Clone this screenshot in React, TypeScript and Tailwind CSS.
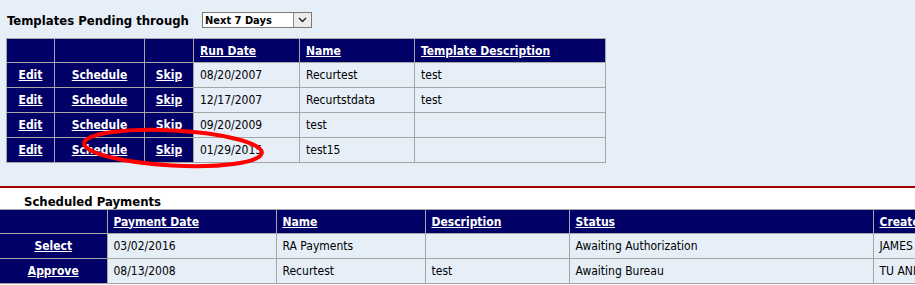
import React from 'react';

const FONT = "font-['DejaVu_Sans_Condensed','DejaVu_Sans',sans-serif]";

const templates = [
  { date: '08/20/2007', name: 'Recurtest', desc: 'test' },
  { date: '12/17/2007', name: 'Recurtstdata', desc: 'test' },
  { date: '09/20/2009', name: 'test', desc: '' },
  { date: '01/29/2015', name: 'test15', desc: '' },
];

const payments = [
  { action: 'Select', date: '03/02/2016', name: 'RA Payments', desc: '', status: 'Awaiting Authorization', by: 'JAMES' },
  { action: 'Approve', date: '08/13/2008', name: 'Recurtest', desc: 'test', status: 'Awaiting Bureau', by: 'TU ANH' },
];

const th = 'h-[24px] border border-[#a6a6a6] bg-[#000066] px-[6px] text-left font-bold text-white';
const act = 'h-[25px] border border-[#a6a6a6] bg-[#000066] text-center font-bold text-white';
const td = 'h-[25px] border border-[#a6a6a6] px-[6px] text-black';

export default function App() {
  return (
    <div className={`w-[915px] h-[285px] overflow-hidden text-[12px] leading-none ${FONT}`}>
      {/* templates pending */}
      <div className="relative h-[186px] bg-[#e6eef8] pl-[6px] pt-[12px]">
        <div className="flex items-center h-[16px]">
          <span className="w-[196px] pl-[1px] text-[13px] font-bold text-black">Templates Pending through</span>
          <div className="flex h-[16px] w-[110px] items-stretch border border-[#7a7a7a] bg-white">
            <span className="flex-1 pl-[2px] pt-[2px] text-[11px] font-bold text-black">Next 7 Days</span>
            <span className="flex w-[18px] items-center justify-center border-l border-[#8a8a8a] bg-[#ececec]">
              <svg width="9" height="6" viewBox="0 0 9 6">
                <path d="M1 1 L4.5 4.5 L8 1" fill="none" stroke="#222" strokeWidth="1.4" />
              </svg>
            </span>
          </div>
        </div>

        <table className="mt-[10px] border-collapse">
          <thead>
            <tr>
              <th className={`${th} w-[48px]`}></th>
              <th className={`${th} w-[90px]`}></th>
              <th className={`${th} w-[49px]`}></th>
              <th className={`${th} w-[106px]`}><span className="underline">Run Date</span></th>
              <th className={`${th} w-[115px]`}><span className="underline">Name</span></th>
              <th className={`${th} w-[191px]`}><span className="underline">Template Description</span></th>
            </tr>
          </thead>
          <tbody>
            {templates.map(t => (
              <tr key={t.date}>
                <td className={act}><span className="underline">Edit</span></td>
                <td className={act}><span className="underline">Schedule</span></td>
                <td className={act}><span className="underline">Skip</span></td>
                <td className={td}>{t.date}</td>
                <td className={td}>{t.name}</td>
                <td className={td}>{t.desc}</td>
              </tr>
            ))}
          </tbody>
        </table>

        {/* annotation */}
        <svg className="pointer-events-none absolute left-0 top-0" width="915" height="186">
          <ellipse cx="173" cy="148" rx="89" ry="17.5" transform="rotate(3 173 148)" fill="none" stroke="#ff0000" strokeWidth="4" />
        </svg>
      </div>

      {/* scheduled payments */}
      <div className="border-t-2 border-[#a00000] bg-white">
        <div className="h-[21px] pl-[24px] pt-[7px] text-[13px] font-bold text-black">Scheduled Payments</div>
        <table className="w-[1000px] border-collapse">
          <thead>
            <tr>
              <th className={`${th} w-[107px] border-l-0`}></th>
              <th className={`${th} w-[169px]`}><span className="underline">Payment Date</span></th>
              <th className={`${th} w-[149px]`}><span className="underline">Name</span></th>
              <th className={`${th} w-[144px]`}><span className="underline">Description</span></th>
              <th className={`${th} w-[304px]`}><span className="underline">Status</span></th>
              <th className={th}><span className="underline">Created By</span></th>
            </tr>
          </thead>
          <tbody>
            {payments.map(p => (
              <tr key={p.date}>
                <td className={`${act} border-l-0 bg-[#000066]`}><span className="underline">{p.action}</span></td>
                <td className={`${td} bg-[#e6eef8]`}>{p.date}</td>
                <td className={`${td} bg-[#e6eef8]`}>{p.name}</td>
                <td className={`${td} bg-[#e6eef8]`}>{p.desc}</td>
                <td className={`${td} bg-[#e6eef8]`}>{p.status}</td>
                <td className={`${td} bg-[#e6eef8]`}>{p.by}</td>
              </tr>
            ))}
          </tbody>
        </table>
      </div>
    </div>
  );
}
